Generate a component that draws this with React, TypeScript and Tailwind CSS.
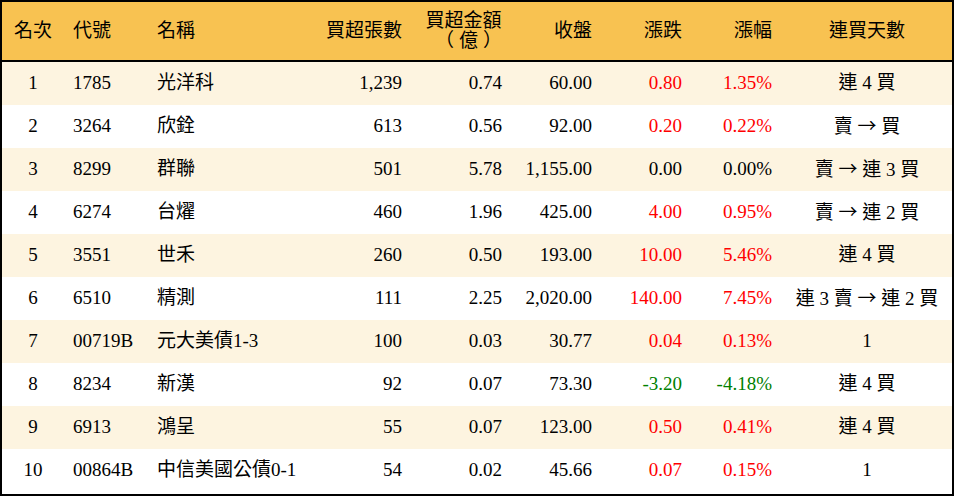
import React from 'react';

type Row = {
  rank: number;
  code: string;
  name: string;
  lots: string;
  amount: string;
  close: string;
  change: string;
  pct: string;
  streak: string;
};

const rows: Row[] = [
  { rank: 1, code: '1785', name: '光洋科', lots: '1,239', amount: '0.74', close: '60.00', change: '0.80', pct: '1.35%', streak: '連 4 買' },
  { rank: 2, code: '3264', name: '欣銓', lots: '613', amount: '0.56', close: '92.00', change: '0.20', pct: '0.22%', streak: '賣 → 買' },
  { rank: 3, code: '8299', name: '群聯', lots: '501', amount: '5.78', close: '1,155.00', change: '0.00', pct: '0.00%', streak: '賣 → 連 3 買' },
  { rank: 4, code: '6274', name: '台燿', lots: '460', amount: '1.96', close: '425.00', change: '4.00', pct: '0.95%', streak: '賣 → 連 2 買' },
  { rank: 5, code: '3551', name: '世禾', lots: '260', amount: '0.50', close: '193.00', change: '10.00', pct: '5.46%', streak: '連 4 買' },
  { rank: 6, code: '6510', name: '精測', lots: '111', amount: '2.25', close: '2,020.00', change: '140.00', pct: '7.45%', streak: '連 3 賣 → 連 2 買' },
  { rank: 7, code: '00719B', name: '元大美債1-3', lots: '100', amount: '0.03', close: '30.77', change: '0.04', pct: '0.13%', streak: '1' },
  { rank: 8, code: '8234', name: '新漢', lots: '92', amount: '0.07', close: '73.30', change: '-3.20', pct: '-4.18%', streak: '連 4 買' },
  { rank: 9, code: '6913', name: '鴻呈', lots: '55', amount: '0.07', close: '123.00', change: '0.50', pct: '0.41%', streak: '連 4 買' },
  { rank: 10, code: '00864B', name: '中信美國公債0-1', lots: '54', amount: '0.02', close: '45.66', change: '0.07', pct: '0.15%', streak: '1' },
];

const cols = 'grid grid-cols-[62px_84px_162px_102px_100px_90px_90px_90px_170px]';

function tone(v: string) {
  if (v.startsWith('-')) return 'text-[#008000]';
  if (parseFloat(v) === 0) return 'text-black';
  return 'text-[#ff0000]';
}

// arrows drawn wider with the CJK face, like the reference
function Streak({ text }: { text: string }) {
  const parts = text.split('→');
  return (
    <>
      {parts.map((p, i) => (
        <React.Fragment key={i}>
          {i > 0 && <span className="[font-family:'Noto_Sans_CJK_TC',sans-serif]">→</span>}
          {p}
        </React.Fragment>
      ))}
    </>
  );
}

export default function App() {
  return (
    <div
      className="w-[954px] h-[496px] border-2 border-black bg-white text-black text-[19px]"
      style={{ fontFamily: '"Liberation Serif", "Noto Sans CJK TC", serif' }}
    >
      {/* Header */}
      <div className={`${cols} h-[60px] items-center bg-[#f8c251] border-b-2 border-black leading-5`}>
        <div className="text-center">名次</div>
        <div className="pl-[9px]">代號</div>
        <div className="pl-[9px]">名稱</div>
        <div className="text-right pr-[10px]">買超張數</div>
        <div className="flex justify-end pr-[10px]">
          <div className="flex flex-col items-center">
            <span>買超金額</span>
            <span className="flex gap-[5px] pl-[10px]">
              <span>（</span>
              <span>億</span>
              <span>）</span>
            </span>
          </div>
        </div>
        <div className="text-right pr-[10px]">收盤</div>
        <div className="text-right pr-[10px]">漲跌</div>
        <div className="text-right pr-[10px]">漲幅</div>
        <div className="text-center">連買天數</div>
      </div>

      {rows.map((r, i) => (
        <div
          key={r.rank}
          className={`${cols} h-[43px] items-center ${i % 2 === 0 ? 'bg-[#fdf4e0]' : 'bg-white'}`}
        >
          <div className="text-center">{r.rank}</div>
          <div className="pl-[9px]">{r.code}</div>
          <div className="pl-[9px] whitespace-nowrap">{r.name}</div>
          <div className="text-right pr-[10px]">{r.lots}</div>
          <div className="text-right pr-[10px]">{r.amount}</div>
          <div className="text-right pr-[10px]">{r.close}</div>
          <div className={`text-right pr-[10px] ${tone(r.change)}`}>{r.change}</div>
          <div className={`text-right pr-[10px] ${tone(r.pct)}`}>{r.pct}</div>
          <div className="text-center whitespace-nowrap">
            <Streak text={r.streak} />
          </div>
        </div>
      ))}
    </div>
  );
}
